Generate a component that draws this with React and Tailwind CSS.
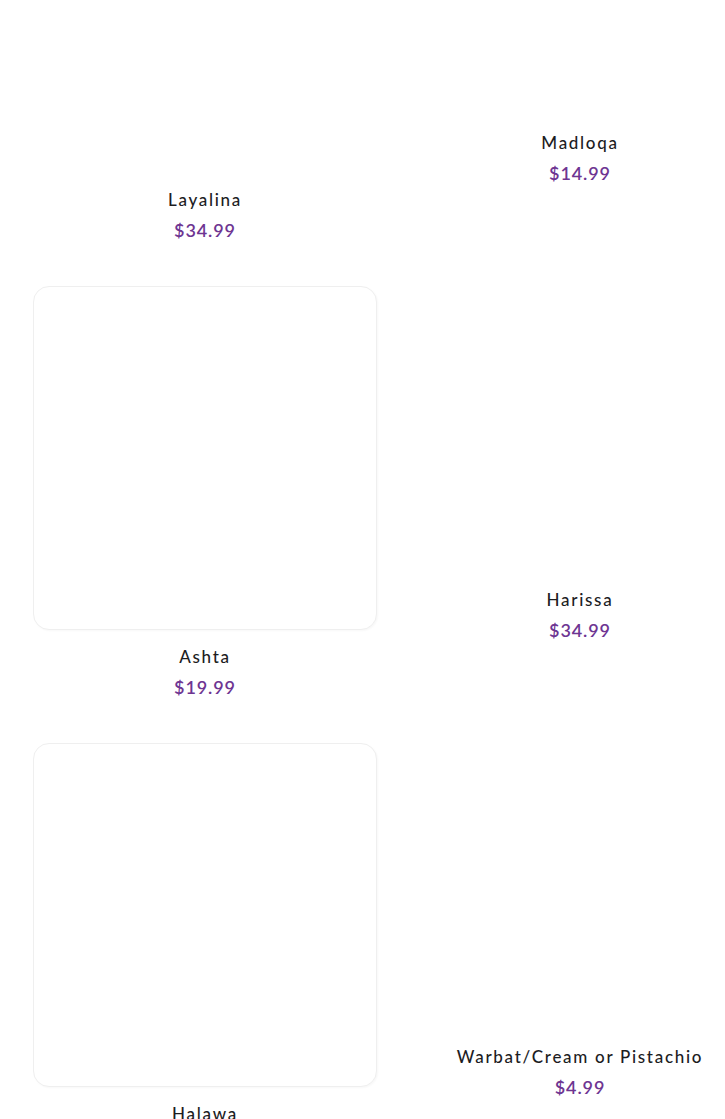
import React from 'react';

const leftItems = [
    { name: 'Layalina', price: '$34.99', bordered: false },
    { name: 'Ashta', price: '$19.99', bordered: true },
    { name: 'Halawa', price: '$14.99', bordered: true },
];

const rightItems = [
    { name: 'Madloqa', price: '$14.99' },
    { name: 'Harissa', price: '$34.99' },
    { name: 'Warbat/Cream or Pistachio', price: '$4.99' },
];

const ProductCard = ({ name, price, bordered }) => {
    return (
        <div className="flex flex-col items-center mb-[44px]">
            <div
                className={`w-[344px] h-[344px] rounded-[16px] bg-white ${
                    bordered ? 'border border-[#efefef] shadow-[1px_1px_2px_rgba(0,0,0,0.03)]' : ''
                }`}
            />
            <div className="mt-[15px] leading-6 text-[17px] font-medium tracking-[1.7px] text-[#1d1d1f] whitespace-nowrap">
                {name}
            </div>
            <div className="mt-[6px] leading-6 text-[18px] font-semibold tracking-[0.9px] text-[#6e3592]">
                {price}
            </div>
        </div>
    );
};

export default function App() {
    return (
        <div
            className="w-[725px] h-[1119px] overflow-hidden bg-white"
            style={{ fontFamily: 'Lato, "Noto Sans", sans-serif' }}
        >
            <div className="flex gap-[31px] pl-[33px]">
                <div className="flex flex-col shrink-0 mt-[-171px]">
                    {leftItems.map((item) => (
                        <ProductCard key={item.name} {...item} />
                    ))}
                </div>
                <div className="flex flex-col shrink-0 mt-[-228px]">
                    {rightItems.map((item) => (
                        <ProductCard key={item.name} {...item} />
                    ))}
                </div>
            </div>
        </div>
    );
}
